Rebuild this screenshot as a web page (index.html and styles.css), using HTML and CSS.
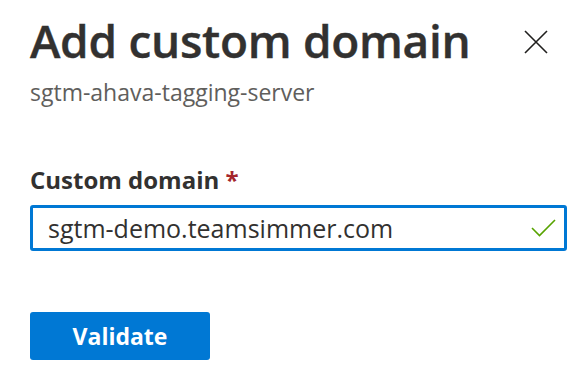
FILE: index.html
```html
<!DOCTYPE html>
<html>
  <head>
    <meta charset="utf-8">
    <title>Add custom domain</title>
    <link rel="stylesheet" href="styles.css">
  </head>
  <body>
    <div class="panel">
      <div class="header">
        <div class="titles">
          <h1 class="title">Add custom domain</h1>
          <div class="subtitle">sgtm-ahava-tagging-server</div>
        </div>
        <button class="close" aria-label="Close">
          <svg width="24" height="24" viewBox="0 0 24 24">
            <path d="M1 1 L23 23 M23 1 L1 23" stroke="#201f1e" stroke-width="1.6" fill="none"/>
          </svg>
        </button>
      </div>

      <div class="field">
        <label class="label" for="domain">Custom domain <span class="required">*</span></label>
        <div class="input-wrap">
          <input id="domain" class="input" type="text" value="sgtm-demo.teamsimmer.com">
          <svg class="check" width="25" height="18" viewBox="0 0 25 18">
            <path d="M1 9 L8.5 16.5 L24 1" stroke="#57a300" stroke-width="1.6" fill="none"/>
          </svg>
        </div>
      </div>

      <button class="button">Validate</button>
    </div>
  </body>
</html>
```

FILE: styles.css
```css
/* Reset default styles */
* {
  margin: 0;
  padding: 0;
  box-sizing: border-box;
}

body {
  font-family: "Open Sans", "Noto Sans", sans-serif;
  background-color: #fff;
  color: #323130;
}

.panel {
  padding: 12px 21px 0 30px;
}

.header {
  display: flex;
  justify-content: space-between;
  align-items: flex-start;
}

.title {
  font-size: 46px;
  font-weight: 600;
  line-height: 56px;
  letter-spacing: -0.3px;
  -webkit-text-stroke: 0.4px #323130;
}

.subtitle {
  font-size: 23px;
  color: #605e5c;
  line-height: 30px;
  margin-top: 9px;
}

.close {
  background: none;
  border: none;
  margin: 18px 19px 0 0;
  width: 24px;
  height: 24px;
}

.field {
  margin-top: 58px;
}

.label {
  display: block;
  font-size: 24px;
  font-weight: 700;
  line-height: 30px;
  margin-bottom: 10px;
}

.required {
  color: #a4262c;
}

.input-wrap {
  display: flex;
  align-items: center;
  border: 3px solid #0078d4;
  border-radius: 3px;
  height: 46px;
  padding: 0 8px 0 15px;
}

.input {
  flex: 1;
  min-width: 0;
  border: none;
  outline: none;
  font-family: inherit;
  font-size: 25px;
  color: #323130;
  background: transparent;
}

.check {
  flex: none;
}

.button {
  margin-top: 61px;
  width: 180px;
  height: 48px;
  background-color: #0078d4;
  color: #fff;
  font-family: inherit;
  font-size: 23px;
  font-weight: 700;
  border: none;
  border-radius: 3px;
}
```
